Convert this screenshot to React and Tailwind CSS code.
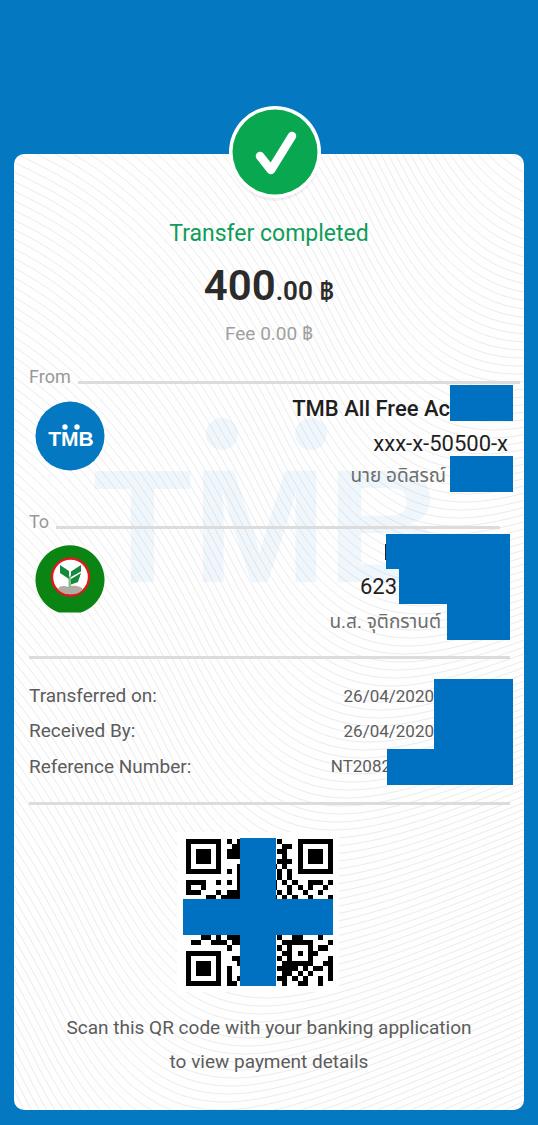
import React from "react";

const FONT = "font-['Roboto','Noto_Sans_Thai','Noto_Sans',sans-serif]";

/* Each curve of the guilloche background is the same stroke, shifted along a diagonal. */
const WAVES = Array.from({ length: 200 }, (_, i) => {
  const n = i - 70;
  return { x: 466 - 3.2 * n, y: 236 + 8 * n };
});

const QR_ROWS = [
  "#######.#.#.......#...#######",
  "#.....#..##........##.#.....#",
  "#.###.#.###.......##..#.###.#",
  "#.###.#.###........#..#.###.#",
  "#.###.#...........###.#.###.#",
  "#.....#...#......#.#..#.....#",
  "#######.#.#.......#.#.#######",
  "..........#.......#.#........",
  "####..#.#.#......#.#.#..###.#",
  "#..#......#......#..#.#.#..#.",
  "###...#.###.......#.#..#..#..",
  "....##.####......#.#.#..#...#",
  ".............................",
  ".............................",
  ".............................",
  ".............................",
  ".............................",
  ".............................",
  ".............................",
  "...##.#.###.......#..##...#..",
  ".##..###.##........######...#",
  "........#.........#.#...#.##.",
  "#######............##.#.##...",
  "#.....#..##.......#.#...#...#",
  "#.###.#...#........######..##",
  "#.###.#.#.........####.#.##.#",
  "#.###.#.#..........##.#.#...#",
  "#.....#.#.#.......##.#.#..#.#",
  "#######.##.........#..##..#..",
];

function Waves() {
  return (
    <svg
      className="absolute inset-0 h-full w-full"
      viewBox="0 0 510 956"
      preserveAspectRatio="xMidYMid slice"
      aria-hidden="true"
    >
      <g fill="#eff7fd">
        <text x="79" y="428" fontSize="162" fontWeight="700" fontFamily="Liberation Sans, Arial, sans-serif">
          TMB
        </text>
        <circle cx="208" cy="280" r="16" />
        <circle cx="297" cy="280" r="16" />
      </g>
      <g fill="none" stroke="#000" strokeOpacity="0.08" strokeWidth="1">
        {WAVES.map((w, i) => (
          <path
            key={i}
            transform={`translate(${w.x} ${w.y})`}
            d="M-900 -570C-760 -540 -540 -500 -350 -400C-240 -340 -170 -220 -120 -120C-80 -45 -40 0 30 0C110 0 260 -70 560 -200"
          />
        ))}
      </g>
    </svg>
  );
}

function CheckBadge() {
  return (
    <svg className="absolute -top-12 left-1/2 -ml-[42px] h-24 w-24" viewBox="0 0 96 96" aria-hidden="true">
      <circle cx="48" cy="50" r="45" fill="#000" opacity="0.05" />
      <circle cx="48" cy="46" r="46" fill="#fff" />
      <circle cx="48" cy="46" r="42.500" fill="#0aa751" />
      <path d="M33 50L44 64L65 30" fill="none" stroke="#fff" strokeWidth="8.500" strokeLinecap="round" strokeLinejoin="round" />
    </svg>
  );
}

function TmbLogo() {
  return (
    <svg className="h-[70px] w-[70px]" viewBox="0 0 70 70" role="img" aria-label="TMB">
      <circle cx="35" cy="35" r="34.500" fill="#0478c0" />
      <text x="36" y="45" textAnchor="middle" fontSize="21" fontWeight="700" fill="#fff" fontFamily="Liberation Sans, Arial, sans-serif">
        TMB
      </text>
      <circle cx="30" cy="26" r="2.700" fill="#fff" />
      <circle cx="42" cy="26" r="2.700" fill="#fff" />
    </svg>
  );
}

function KbankLogo() {
  return (
    <svg className="h-[70px] w-[70px]" viewBox="0 0 70 70" role="img" aria-label="Kasikorn Bank">
      <path d="M24 67.500A34.500 34.500 0 1 1 46 67.500Z" fill="#0a8412" />
      <circle cx="35.500" cy="32" r="18.500" fill="#fff" stroke="#e01a1c" strokeWidth="2.400" />
      <path d="M23 44C25 40 30 41 33 42C37 40 44 40 48 44C44 49 40 49.500 35 49C30 49.500 26 48 23 44Z" fill="#b3aba6" />
      <path d="M33.500 44V32L36 30V44Z" fill="#7fc18c" />
      <path d="M25 20L34 26V34L25 28Z" fill="#138a3c" />
      <path d="M46 20L36 26.500V32L46 26.500Z" fill="#138a3c" />
      <path d="M46 28L36 34V39.500L43 37Z" fill="#138a3c" />
    </svg>
  );
}

function QrCode() {
  return (
    <div className="relative mr-[22px] h-[148px] w-[150px] bg-white pl-[3px] pt-px shadow-[0_0_0_6px_#fff]">
      <svg className="h-[147px] w-[147px]" viewBox="0 0 29 29" shapeRendering="crispEdges" role="img" aria-label="QR code">
        {QR_ROWS.map((row, y) =>
          [...row].map((c, x) => (c === "#" ? <rect key={`${x}-${y}`} x={x} y={y} width="1" height="1" /> : null))
        )}
      </svg>
      <div className="absolute inset-y-0 left-[57px] w-9 bg-[#0070c0]" />
      <div className="absolute inset-x-0 top-[61px] h-9 bg-[#0070c0]" />
    </div>
  );
}

function Masked({ className }) {
  return <span className={`shrink-0 self-stretch bg-[#0070c0] ${className}`} />;
}

function SectionTitle({ children, className }) {
  return (
    <div className={`flex h-4 items-center ${className}`}>
      <h2 className="text-[18px] leading-4 text-[#999]">{children}</h2>
      <span className="mt-[10px] h-[3px] flex-1 bg-[#dcdcdc]" />
    </div>
  );
}

function DetailRow({ label, value, mask, className }) {
  return (
    <div className={`flex items-center ${className}`}>
      <dt className="flex-1">{label}</dt>
      <dd className="flex items-center self-stretch text-[17px]">
        {value}
        <Masked className={mask} />
      </dd>
    </div>
  );
}

export default function App() {
  return (
    <main className={`min-h-screen bg-[#0478c0] px-[14px] pb-[14px] pt-[154px] ${FONT}`}>
      <article className="relative rounded-[10px] bg-[#fefefe]">
        <div className="absolute inset-0 overflow-hidden rounded-[10px]">
          <Waves />
        </div>
        <CheckBadge />
        <div className="relative flex flex-col pb-[31px] pt-[64px]">
          <header className="flex flex-col items-center text-center">
            <h1 className="text-[23px] leading-8 text-[#0f9d58]">Transfer completed</h1>
            <p className="mt-3 text-[42px] font-semibold leading-[48px] text-[#2b2b2b]">
              400<span className="text-[26px]">.00 ฿</span>
            </p>
            <p className="text-[19px] leading-[38px] text-[#a0a0a0]">Fee 0.00 ฿</p>
          </header>

          <section>
            <SectionTitle className="mt-4 gap-[7px] pl-[15px] pr-1">From</SectionTitle>
            <div className="flex items-start justify-between pl-[21px] pr-[11px]">
              <div className="pt-4">
                <TmbLogo />
              </div>
              <div className="flex flex-col items-end text-[22px] leading-6 text-[#1f1f1f]">
                <p className="flex h-9 items-center font-medium">
                  <span className="pt-3">TMB All Free Ac</span>
                  <Masked className="w-[63px]" />
                </p>
                <p className="flex h-[35px] items-center pr-[5px] pt-[10px]">xxx-x-50500-x</p>
                <p className="flex h-9 items-center text-[19px] text-[#6d6d6d]">
                  <span className="pr-1 pt-1">นาย อดิสรณ์</span>
                  <Masked className="w-[63px]" />
                </p>
              </div>
            </div>
          </section>

          <section>
            <SectionTitle className="mt-[22px] gap-[7px] pl-[15px] pr-6">To</SectionTitle>
            <div className="flex items-start justify-between pl-[21px] pr-[14px]">
              <div className="pt-[15px]">
                <KbankLogo />
              </div>
              <div className="flex flex-col items-end pt-1 text-[22px] leading-6 text-[#1f1f1f]">
                <p className="flex h-[35px] items-center">
                  <span className="h-4 w-px bg-[#1f1f1f]" />
                  <Masked className="w-[124px]" />
                </p>
                <p className="flex h-[35px] items-center">
                  <span className="pr-[2px]">623</span>
                  <Masked className="w-[111px]" />
                </p>
                <p className="flex h-9 items-center text-[19px] text-[#6d6d6d]">
                  <span className="pr-[6px]">น.ส. จุติกรานต์</span>
                  <Masked className="w-[63px]" />
                </p>
              </div>
            </div>
          </section>

          <hr className="ml-[15px] mr-[14px] mt-4 h-[3px] border-0 bg-[#dcdcdc]" />
          <dl className="mt-5 pl-[15px] pr-[11px] text-[19px] text-[#5c5c5c]">
            <DetailRow label="Transferred on:" value="26/04/2020" mask="w-[79px]" className="h-[35px]" />
            <DetailRow label="Received By:" value="26/04/2020" mask="w-[79px]" className="h-[35px]" />
            <DetailRow label="Reference Number:" value="NT2082" mask="-ml-1 w-[126px]" className="h-9" />
          </dl>
          <hr className="ml-[15px] mr-[14px] mt-[17px] h-[3px] border-0 bg-[#dcdcdc]" />

          <footer className="mt-[33px] flex flex-col items-center">
            <QrCode />
            <p className="mt-[25px] px-10 text-center text-[19px] leading-[34px] text-[#5c5c5c]">
              Scan this QR code with your banking application
              <br />
              to view payment details
            </p>
          </footer>
        </div>
      </article>
    </main>
  );
}
